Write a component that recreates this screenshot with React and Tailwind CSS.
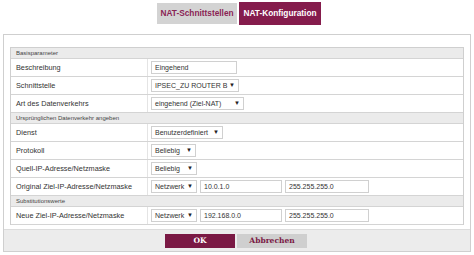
import React from "react";

const font = { fontFamily: '"Liberation Sans", Arial, sans-serif' };

function Section({ title }) {
  return (
    <div className="h-[11px] bg-[#ebebeb] border-b border-[#d4d4d4] pl-[5px] text-[6px] leading-[11px] text-[#444]">
      {title}
    </div>
  );
}

function Row({ label, children }) {
  return (
    <div className="flex h-[18px] border-b border-[#d4d4d4] bg-white">
      <div className="w-[137px] pl-[5px] text-[7.3px] leading-[18px] text-[#333] border-r border-[#e4e4e4] whitespace-nowrap">
        {label}
      </div>
      <div className="flex items-center gap-[3px] pl-[3px]">{children}</div>
    </div>
  );
}

function Input({ value, w }) {
  return (
    <div
      className={`${w} h-[13px] border border-[#d0d0d0] bg-white pl-[3px] text-[7px] leading-[11px] text-[#333] whitespace-nowrap`}
    >
      {value}
    </div>
  );
}

function Select({ value, w }) {
  return (
    <div
      className={`${w} h-[13px] border border-[#d0d0d0] bg-white pl-[3px] pr-[3px] flex items-center justify-between text-[7px] leading-[11px] text-[#333] whitespace-nowrap`}
    >
      <span>{value}</span>
      <span className="text-[6px] text-[#222]">▼</span>
    </div>
  );
}

export default function App() {
  return (
    <div className="w-[474px] h-[255px] bg-white overflow-hidden" style={font}>
      {/* tabs */}
      <div className="flex items-center pl-[157px] pt-[2px] gap-[2px]">
        <div className="w-[80px] h-[21px] bg-[#d3d3d3] text-[#8a2453] text-[8.3px] font-bold flex items-center justify-center whitespace-nowrap">
          NAT-Schnittstellen
        </div>
        <div className="w-[82px] h-[23px] bg-[#851c4c] text-white text-[8.3px] font-bold flex items-center justify-center whitespace-nowrap">
          NAT-Konfiguration
        </div>
      </div>

      {/* panel */}
      <div className="mx-[3px] mt-[9px] h-[218px] border border-[#cfcfcf] flex flex-col">
        <div className="mt-[12px] mx-[6px] border border-[#cfcfcf] border-b-0">
          <Section title="Basisparameter" />
          <Row label="Beschreibung">
            <Input value="Eingehend" w="w-[86px]" />
          </Row>
          <Row label="Schnittstelle">
            <Select value="IPSEC_ZU ROUTER B" w="w-[88px]" />
          </Row>
          <Row label="Art des Datenverkehrs">
            <Select value="eingehend (Ziel-NAT)" w="w-[93px]" />
          </Row>
          <Section title="Ursprünglichen Datenverkehr angeben" />
          <Row label="Dienst">
            <Select value="Benutzerdefiniert" w="w-[72px]" />
          </Row>
          <Row label="Protokoll">
            <Select value="Beliebig" w="w-[45px]" />
          </Row>
          <Row label="Quell-IP-Adresse/Netzmaske">
            <Select value="Beliebig" w="w-[46px]" />
          </Row>
          <Row label="Original Ziel-IP-Adresse/Netzmaske">
            <Select value="Netzwerk" w="w-[46px]" />
            <Input value="10.0.1.0" w="w-[82px]" />
            <Input value="255.255.255.0" w="w-[84px]" />
          </Row>
          <Section title="Substitutionswerte" />
          <Row label="Neue Ziel-IP-Adresse/Netzmaske">
            <Select value="Netzwerk" w="w-[46px]" />
            <Input value="192.168.0.0" w="w-[82px]" />
            <Input value="255.255.255.0" w="w-[84px]" />
          </Row>
        </div>

        {/* buttons */}
        <div className="mt-auto h-[22px] bg-[#ececec] border-t border-[#dcdcdc] flex items-center pl-[161px] gap-[2px]">
          <div className="w-[70px] h-[14px] bg-[#7a1944] text-white text-[7.5px] font-bold flex items-center justify-center" style={{ fontFamily: '"DejaVu Serif", "Liberation Serif", serif' }}>
            OK
          </div>
          <div className="w-[70px] h-[14px] bg-[#cfcfcf] text-[#7a1944] text-[7.5px] font-bold flex items-center justify-center" style={{ fontFamily: '"DejaVu Serif", "Liberation Serif", serif' }}>
            Abbrechen
          </div>
        </div>
      </div>
    </div>
  );
}
